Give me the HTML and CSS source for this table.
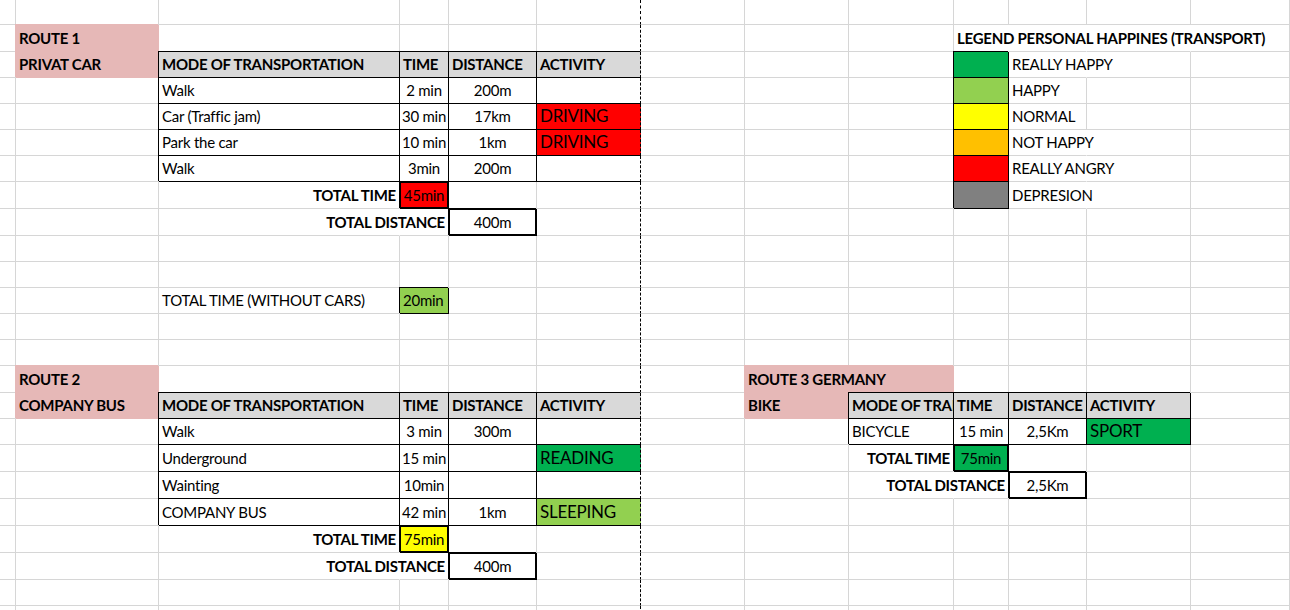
FILE: index.html
```html
<!DOCTYPE html>
<html lang="en">
<head>
<meta charset="utf-8">
<title>Routes</title>
<link rel="stylesheet" href="styles.css">
</head>
<body>
<div class="sheet">
  <div class="row"><div></div><div></div><div></div><div></div><div></div><div class="pb"></div><div></div><div></div><div></div><div></div><div></div><div></div><div></div></div>
  <div class="row"><div></div><div class="pink b">ROUTE 1</div><div></div><div></div><div></div><div class="pb"></div><div></div><div></div><div></div><div class="b nr">LEGEND PERSONAL HAPPINES (TRANSPORT)</div><div class="nr"></div><div class="nr"></div><div></div></div>
  <div class="row"><div></div><div class="pink b">PRIVAT CAR</div><div class="hd bk">MODE OF TRANSPORTATION</div><div class="hd bk">TIME</div><div class="hd bk">DISTANCE</div><div class="hd bk pb">ACTIVITY</div><div></div><div></div><div></div><div class="bk g1"></div><div class="nr">REALLY HAPPY</div><div></div><div></div></div>
  <div class="row"><div></div><div></div><div class="bk">Walk</div><div class="bk ctr">2 min</div><div class="bk ctr">200m</div><div class="bk pb"></div><div></div><div></div><div></div><div class="bk g2"></div><div>HAPPY</div><div></div><div></div></div>
  <div class="row"><div></div><div></div><div class="bk">Car (Traffic jam)</div><div class="bk ctr">30 min</div><div class="bk ctr">17km</div><div class="bk pb red big">DRIVING</div><div></div><div></div><div></div><div class="bk yel"></div><div>NORMAL</div><div></div><div></div></div>
  <div class="row"><div></div><div></div><div class="bk">Park the car</div><div class="bk ctr">10 min</div><div class="bk ctr">1km</div><div class="bk pb red big">DRIVING</div><div></div><div></div><div></div><div class="bk org"></div><div class="nr">NOT HAPPY</div><div></div><div></div></div>
  <div class="row"><div></div><div></div><div class="bk">Walk</div><div class="bk ctr">3min</div><div class="bk ctr">200m</div><div class="bk pb"></div><div></div><div></div><div></div><div class="bk red"></div><div class="nr">REALLY ANGRY</div><div></div><div></div></div>
  <div class="row"><div></div><div></div><div class="b rt">TOTAL TIME</div><div class="box2 red ctr">45min</div><div></div><div class="pb"></div><div></div><div></div><div></div><div class="bk gry"></div><div class="nr">DEPRESION</div><div></div><div></div></div>
  <div class="row"><div></div><div></div><div class="nr"></div><div class="b rt">TOTAL DISTANCE</div><div class="box2 ctr">400m</div><div class="pb"></div><div></div><div></div><div></div><div></div><div></div><div></div><div></div></div>
  <div class="row"><div></div><div></div><div></div><div></div><div></div><div class="pb"></div><div></div><div></div><div></div><div></div><div></div><div></div><div></div></div>
  <div class="row"><div></div><div></div><div></div><div></div><div></div><div class="pb"></div><div></div><div></div><div></div><div></div><div></div><div></div><div></div></div>
  <div class="row"><div></div><div></div><div>TOTAL TIME (WITHOUT CARS)</div><div class="bk g2">20min</div><div></div><div class="pb"></div><div></div><div></div><div></div><div></div><div></div><div></div><div></div></div>
  <div class="row"><div></div><div></div><div></div><div></div><div></div><div class="pb"></div><div></div><div></div><div></div><div></div><div></div><div></div><div></div></div>
  <div class="row"><div></div><div></div><div></div><div></div><div></div><div class="pb"></div><div></div><div></div><div></div><div></div><div></div><div></div><div></div></div>
  <div class="row"><div></div><div class="pink b">ROUTE 2</div><div></div><div></div><div></div><div class="pb"></div><div></div><div class="pink b span2">ROUTE 3 GERMANY</div><div></div><div></div><div></div><div></div></div>
  <div class="row"><div></div><div class="pink b">COMPANY BUS</div><div class="hd bk">MODE OF TRANSPORTATION</div><div class="hd bk">TIME</div><div class="hd bk">DISTANCE</div><div class="hd bk pb">ACTIVITY</div><div></div><div class="pink b">BIKE</div><div class="hd bk clip">MODE OF TRANSPORTATION</div><div class="hd bk">TIME</div><div class="hd bk">DISTANCE</div><div class="hd bk">ACTIVITY</div><div></div></div>
  <div class="row"><div></div><div></div><div class="bk">Walk</div><div class="bk ctr">3 min</div><div class="bk ctr">300m</div><div class="bk pb"></div><div></div><div></div><div class="bk">BICYCLE</div><div class="bk ctr">15 min</div><div class="bk ctr">2,5Km</div><div class="bk g1 big">SPORT</div><div></div></div>
  <div class="row"><div></div><div></div><div class="bk">Underground</div><div class="bk ctr">15 min</div><div class="bk ctr"></div><div class="bk pb g1 big">READING</div><div></div><div></div><div class="b rt">TOTAL TIME</div><div class="box2 g1 ctr">75min</div><div></div><div></div><div></div></div>
  <div class="row"><div></div><div></div><div class="bk">Wainting</div><div class="bk ctr">10min</div><div class="bk ctr"></div><div class="bk pb"></div><div></div><div></div><div class="nr"></div><div class="b rt">TOTAL DISTANCE</div><div class="box2 ctr">2,5Km</div><div></div><div></div></div>
  <div class="row"><div></div><div></div><div class="bk">COMPANY BUS</div><div class="bk ctr">42 min</div><div class="bk ctr">1km</div><div class="bk pb g2 big">SLEEPING</div><div></div><div></div><div></div><div></div><div></div><div></div><div></div></div>
  <div class="row"><div></div><div></div><div class="b rt">TOTAL TIME</div><div class="box2 yel ctr">75min</div><div></div><div class="pb"></div><div></div><div></div><div></div><div></div><div></div><div></div><div></div></div>
  <div class="row"><div></div><div></div><div class="nr"></div><div class="b rt">TOTAL DISTANCE</div><div class="box2 ctr">400m</div><div class="pb"></div><div></div><div></div><div></div><div></div><div></div><div></div><div></div></div>
  <div class="row"><div></div><div></div><div></div><div></div><div></div><div class="pb"></div><div></div><div></div><div></div><div></div><div></div><div></div><div></div></div>
  <div class="row"><div></div><div></div><div></div><div></div><div></div><div class="pb"></div><div></div><div></div><div></div><div></div><div></div><div></div><div></div></div>
</div>
</body>
</html>
```

FILE: styles.css
```css
html, body {
  margin: 0;
  padding: 0;
  background: #fff;
  overflow: hidden;
}

.sheet {
  display: grid;
  grid-template-columns: 16px 143px 241px 49px 88px 104px 104px 104px 105px 55px 78px 104px 1fr;
  grid-template-rows: 25px 27px 26px 26px 26px 26px 26px 27px 27px 26px 26px 26px 26px 26px 27px 26px 26px 27px 27px 27px 27px 27px 26px 30px;
  width: 1290px;
  height: 610px;
  overflow: hidden;
  font-family: Lato, "Liberation Sans", sans-serif;
  font-size: 15px;
  letter-spacing: -0.25px;
  color: #000;
}

.row {
  display: contents;
}

:where(.row > div) {
  box-sizing: border-box;
  min-width: 0;
  display: flex;
  align-items: flex-end;
  padding: 0 3px 4px;
  line-height: 18px;
  white-space: nowrap;
  border-right: 1px solid #d6d6d6;
  border-bottom: 1px solid #d6d6d6;
}

.b { font-weight: 700; }
.ctr { justify-content: center; }
.rt { justify-content: flex-end; }
.clip { overflow: hidden; }
.big { font-size: 17px; padding-bottom: 4px; }
.span2 { grid-column: span 2; }

.nr { border-right-color: transparent; }

.pink {
  background: #e6b8b7;
  border-right-color: #e6b8b7;
  border-bottom-color: #e6b8b7;
  box-shadow: -1px -1px 0 #e6b8b7;
}

.hd { background: #d9d9d9; font-weight: 700; }

.bk {
  border-right-color: #000;
  border-bottom-color: #000;
  box-shadow: -1px -1px 0 #000;
}

.box2 {
  border-right-color: #000;
  border-bottom-color: #000;
  box-shadow: -1px -1px 0 #000, inset 1px 1px 0 #000, inset -1px -1px 0 #000;
}

.pb {
  border-right-style: dashed;
  border-right-color: #000;
}

.red { background: #ff0000; }
.g1 { background: #00b050; }
.g2 { background: #92d050; }
.yel { background: #ffff00; }
.org { background: #ffc000; }
.gry { background: #808080; }
```
